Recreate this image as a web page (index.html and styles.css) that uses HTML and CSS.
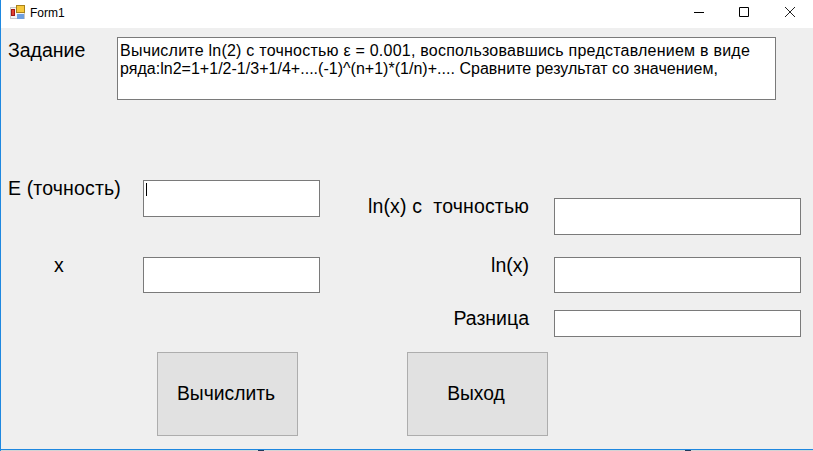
FILE: index.html
```html
<!DOCTYPE html>
<html lang="ru">
<head>
<meta charset="utf-8">
<title>Form1</title>
<link rel="stylesheet" href="styles.css">
</head>
<body>
<div class="window">
  <header class="titlebar">
    <svg class="app-icon" width="15" height="15" viewBox="0 0 15 15">
      <rect x="0" y="2" width="15" height="12" fill="#c8c8c8"/>
      <rect x="1" y="3" width="13" height="10" fill="#f4f4f4"/>
      <rect x="6" y="0" width="9" height="8" fill="#a8821c"/>
      <rect x="7" y="1" width="7" height="6" fill="#f7c83c"/>
      <rect x="1" y="4" width="4" height="7" fill="#a01818"/>
      <rect x="2" y="5" width="2" height="5" fill="#e04030"/>
      <rect x="7" y="9" width="7" height="5" fill="#6f9fe0"/>
    </svg>
    <span class="title">Form1</span>
    <div class="controls">
      <svg class="ctl" width="46" height="28" viewBox="0 0 46 28"><path d="M19 12.5h10" stroke="#000" fill="none"/></svg>
      <svg class="ctl" width="46" height="28" viewBox="0 0 46 28"><path d="M18.5 7.5h9v9h-9z" stroke="#000" fill="none"/></svg>
      <svg class="ctl" width="46" height="28" viewBox="0 0 46 28"><path d="M18 7l10 10M28 7l-10 10" stroke="#222" fill="none"/></svg>
    </div>
  </header>
  <main class="form">
    <section class="task">
      <span class="label task-label">Задание</span>
      <div class="task-box"><span class="line line-1">Вычислите ln(2) с точностью ε = 0.001, воспользовавшись представлением в виде</span> <span class="line line-2">ряда:ln2=1+1/2-1/3+1/4+....(-1)^(n+1)*(1/n)+.... Сравните результат со значением,</span></div>
    </section>
    <section class="fields">
      <div class="col-left">
        <div class="row-e">
          <span class="label label-e label-long">Е (точность)</span>
          <div class="input input-tall"><i class="caret"></i></div>
        </div>
        <div class="row-x">
          <span class="label label-x">x</span>
          <div class="input input-x"></div>
        </div>
      </div>
      <div class="col-right">
        <div class="row-r row-r1">
          <span class="label label-r label-long">ln(x) с&nbsp; точностью</span>
          <div class="input input-wide input-tall"></div>
        </div>
        <div class="row-r row-r2">
          <span class="label label-r">ln(x)</span>
          <div class="input input-wide input-x"></div>
        </div>
        <div class="row-r row-r3">
          <span class="label label-r">Разница</span>
          <div class="input input-wide input-short"></div>
        </div>
      </div>
    </section>
    <section class="buttons">
      <button class="btn" type="button">Вычислить</button>
      <button class="btn" type="button">Выход</button>
    </section>
  </main>
  <footer class="bottom-edge"><i class="tick tick-a"></i><i class="tick tick-b"></i></footer>
</div>
</body>
</html>
```

FILE: styles.css
```css
* { box-sizing: border-box; }
html, body { margin: 0; padding: 0; }
body { width: 813px; height: 451px; overflow: hidden; background: #fff; font-family: "Liberation Sans", Arial, sans-serif; color: #000; }
.window { width: 813px; height: 451px; display: flex; flex-direction: column; border-left: 1px solid #1e88e0; }
.titlebar { height: 28px; flex: none; background: #fff; display: flex; align-items: center; padding-left: 9px; }
.app-icon { flex: none; margin-top: -4px; }
.title { font-size: 12px; margin-left: 5px; margin-top: -3px; color: #000; }
.controls { margin-left: auto; display: flex; }
.ctl { display: block; }
.form { height: 422px; flex: none; background: #efefef; border-bottom: 1px solid #1e88e0; padding-left: 7px; }
.label { font-size: 19.5px; line-height: 22px; white-space: nowrap; }
.label-long { letter-spacing: 0.15px; }
.task { display: flex; padding-top: 9px; height: 72px; }
.task-label { width: 109px; flex: none; padding-top: 2px; }
.task-box { width: 659px; height: 63px; flex: none; background: #fff; border: 1px solid #7a7a7a; font-size: 16px; line-height: 18px; padding: 4px 1px 0 2px; }
.line { display: block; white-space: nowrap; }
.line-1 { letter-spacing: 0.23px; }
.line-2 { letter-spacing: 0.02px; }
.fields { display: flex; margin-top: 80px; }
.col-left { width: 312px; flex: none; }
.row-e { display: flex; height: 37px; }
.label-e { width: 135px; flex: none; margin-top: -3px; }
.row-x { display: flex; height: 36px; margin-top: 40px; }
.label-x { width: 135px; flex: none; padding-left: 46px; margin-top: -3px; }
.col-right { margin-left: 49px; padding-top: 18px; width: 432px; flex: none; }
.row-r { display: flex; justify-content: flex-end; }
.row-r1 { height: 37px; }
.row-r2 { height: 36px; margin-top: 22px; }
.row-r3 { height: 27px; margin-top: 17px; }
.label-r { margin-right: 25px; margin-top: -3px; }
.input { background: #fff; border: 1px solid #7a7a7a; width: 177px; position: relative; flex: none; }
.input-wide { width: 247px; }
.input-tall { height: 37px; }
.input-x { height: 36px; }
.input-short { height: 27px; }
.caret { position: absolute; left: 2px; top: 2px; width: 1px; height: 13px; background: #000; }
.buttons { display: flex; gap: 109px; padding-left: 149px; margin-top: 15px; }
.btn { width: 141px; height: 84px; background: #e1e1e1; border: 1px solid #adadad; font-family: "Liberation Sans", Arial, sans-serif; font-size: 19.3px; color: #000; padding: 0 3px 0 0; }
.bottom-edge { height: 1px; flex: none; background: #d4d4d4; position: relative; }
.tick { position: absolute; top: 0; height: 1px; background: #1f3a5c; }
.tick-a { left: 257px; width: 6px; }
.tick-b { left: 684px; width: 6px; }
```
